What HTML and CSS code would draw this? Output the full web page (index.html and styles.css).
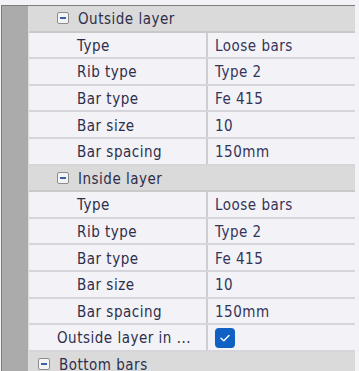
FILE: index.html
```html
<!DOCTYPE html>
<html lang="en">
<head>
  <meta charset="UTF-8" />
  <title>Properties</title>
  <link rel="stylesheet" href="styles.css">
</head>
<body>
  <div class="grid">
    <div class="gutter"></div>
    <div class="rows">
      <div class="row head lvl2"><span class="toggle"></span>Outside layer</div>
      <div class="row"><div class="name lvl3">Type</div><div class="value">Loose bars</div></div>
      <div class="row"><div class="name lvl3">Rib type</div><div class="value">Type 2</div></div>
      <div class="row"><div class="name lvl3">Bar type</div><div class="value">Fe 415</div></div>
      <div class="row"><div class="name lvl3">Bar size</div><div class="value">10</div></div>
      <div class="row"><div class="name lvl3">Bar spacing</div><div class="value">150mm</div></div>

      <div class="row head lvl2"><span class="toggle"></span>Inside layer</div>
      <div class="row"><div class="name lvl3">Type</div><div class="value">Loose bars</div></div>
      <div class="row"><div class="name lvl3">Rib type</div><div class="value">Type 2</div></div>
      <div class="row"><div class="name lvl3">Bar type</div><div class="value">Fe 415</div></div>
      <div class="row"><div class="name lvl3">Bar size</div><div class="value">10</div></div>
      <div class="row"><div class="name lvl3">Bar spacing</div><div class="value">150mm</div></div>

      <div class="row"><div class="name lvl2">Outside layer in ...</div>
        <div class="value">
          <span class="check">
            <svg width="12" height="10" viewBox="0 0 12 10"><path d="M2 5.2 L4.8 7.8 L10 2.4" fill="none" stroke="#fff" stroke-width="1.4" stroke-linecap="round" stroke-linejoin="round"/></svg>
          </span>
        </div>
      </div>

      <div class="row head lvl1"><span class="toggle"></span>Bottom bars</div>
    </div>
  </div>
</body>
</html>
```

FILE: styles.css
```css
body {
  margin: 0;
  background: #f3f3f7;
  font-family: "DejaVu Sans Condensed", "DejaVu Sans", sans-serif;
  font-size: 15px;
  letter-spacing: 0.5px;
  color: #2e2e4a;
  height: 371px;
  overflow: hidden;
}

.grid {
  display: flex;
  margin-top: 5px;
  margin-left: 1px;
  width: 353px;
  border-top: 1px solid #7d7d7d;
  border-left: 1px solid #7d7d7d;
}

.gutter {
  width: 26px;
  background: #ababab;
  border-right: 1px solid #dcdcdc;
}

.rows {
  flex: 1;
}

.row {
  display: flex;
  align-items: center;
  height: 26.6px;
  box-sizing: border-box;
  padding-top: 2px;
  border-bottom: 2px solid #d5d5da;
  background: #f2f2f7;
  white-space: nowrap;
  overflow: hidden;
}

.row.head {
  background: #dadada;
  border-bottom-color: #c9c9c9;
}

.row.lvl1 {
  padding-left: 9px;
}

.row.lvl2 {
  padding-left: 28px;
}

.toggle {
  position: relative;
  width: 10px;
  height: 10px;
  margin-top: -2px;
  margin-right: 9px;
  border: 1px solid #8c8c8c;
  border-radius: 2px;
  background: #f4f4f4;
}

.toggle::after {
  content: "";
  position: absolute;
  left: 2px;
  top: 4px;
  width: 6px;
  height: 2px;
  background: #3b5fa8;
}

.name {
  width: 177px;
  box-sizing: border-box;
  overflow: hidden;
}

.name.lvl2 {
  padding-left: 28px;
}

.name.lvl3 {
  padding-left: 48px;
}

.value {
  flex: 1;
  align-self: stretch;
  display: flex;
  align-items: center;
  margin-top: -2px;
  padding-top: 2px;
  padding-left: 7px;
  border-left: 2px solid #cdcdd2;
  color: #34345a;
}

.check {
  display: flex;
  align-items: center;
  justify-content: center;
  width: 20px;
  height: 20px;
  margin-top: -1px;
  border-radius: 4px;
  background: #1160c4;
}
```
